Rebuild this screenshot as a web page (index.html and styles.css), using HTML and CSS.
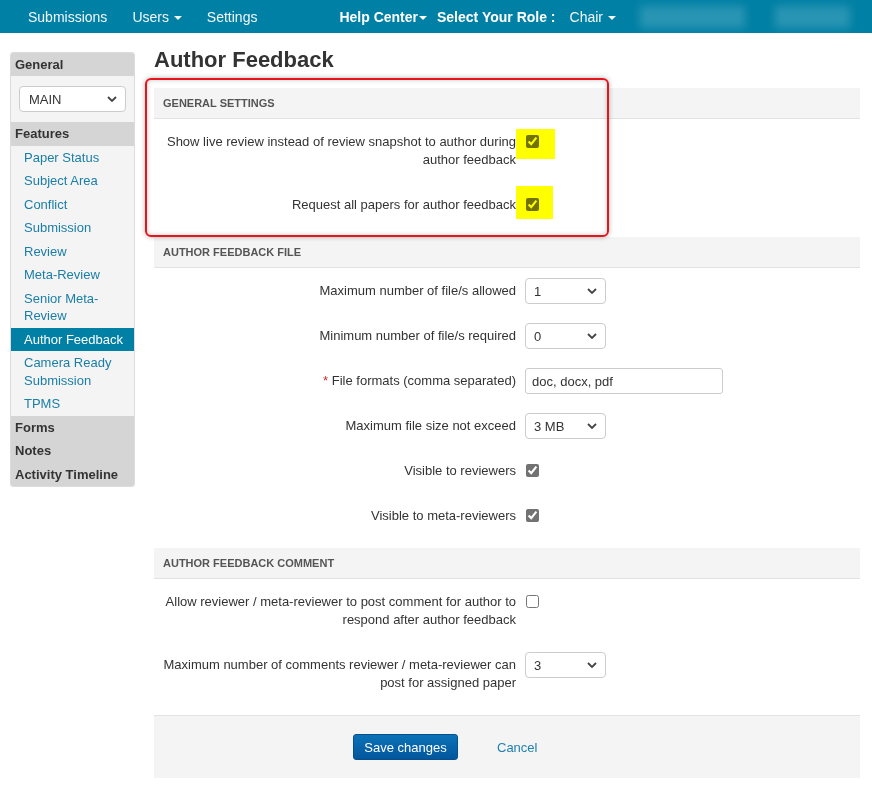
FILE: index.html
```html
<!DOCTYPE html>
<html lang="en">
<head>
    <meta charset="UTF-8">
    <title>Author Feedback</title>
    <link rel="stylesheet" href="styles.css">
</head>
<body>

<nav class="topbar">
    <a href="#" class="nav-link nav-submissions">Submissions</a>
    <a href="#" class="nav-link nav-users">Users <span class="caret"></span></a>
    <a href="#" class="nav-link nav-settings">Settings</a>
    <a href="#" class="nav-link nav-bold nav-help">Help Center<span class="caret"></span></a>
    <span class="nav-bold nav-role">Select Your Role :</span>
    <a href="#" class="nav-link nav-chair">Chair <span class="caret"></span></a>
    <span class="nav-blur blur-name"></span>
    <span class="nav-blur blur-user"></span>
</nav>

<div class="layout">
    <aside class="sidebar">
        <div class="side-head">General</div>
        <div class="side-select-wrap">
            <select class="side-select">
                <option>MAIN</option>
            </select>
        </div>
        <div class="side-head">Features</div>
        <a href="#" class="side-link">Paper Status</a>
        <a href="#" class="side-link">Subject Area</a>
        <a href="#" class="side-link">Conflict</a>
        <a href="#" class="side-link">Submission</a>
        <a href="#" class="side-link">Review</a>
        <a href="#" class="side-link">Meta-Review</a>
        <a href="#" class="side-link">Senior Meta-Review</a>
        <a href="#" class="side-link active">Author Feedback</a>
        <a href="#" class="side-link">Camera Ready Submission</a>
        <a href="#" class="side-link">TPMS</a>
        <div class="side-head">Forms</div>
        <div class="side-head">Notes</div>
        <div class="side-head">Activity Timeline</div>
    </aside>

    <main class="main">
        <h1 class="page-title">Author Feedback</h1>

        <form>
            <section class="panel">
                <div class="panel-head">General Settings</div>
                <div class="panel-body">
                    <div class="form-row">
                        <label class="row-label" for="chk-live">Show live review instead of review snapshot to author during author feedback</label>
                        <div class="row-control"><input type="checkbox" id="chk-live" class="check" checked></div>
                    </div>
                    <div class="form-row">
                        <label class="row-label" for="chk-all">Request all papers for author feedback</label>
                        <div class="row-control"><input type="checkbox" id="chk-all" class="check" checked></div>
                    </div>
                </div>
            </section>

            <section class="panel">
                <div class="panel-head">Author Feedback File</div>
                <div class="panel-body">
                    <div class="form-row">
                        <label class="row-label" for="sel-max">Maximum number of file/s allowed</label>
                        <div class="row-control">
                            <select id="sel-max" class="select"><option>1</option></select>
                        </div>
                    </div>
                    <div class="form-row">
                        <label class="row-label" for="sel-min">Minimum number of file/s required</label>
                        <div class="row-control">
                            <select id="sel-min" class="select"><option>0</option></select>
                        </div>
                    </div>
                    <div class="form-row">
                        <label class="row-label" for="txt-formats"><span class="required">*</span> File formats (comma separated)</label>
                        <div class="row-control">
                            <input type="text" id="txt-formats" class="text-input" value="doc, docx, pdf">
                        </div>
                    </div>
                    <div class="form-row">
                        <label class="row-label" for="sel-size">Maximum file size not exceed</label>
                        <div class="row-control">
                            <select id="sel-size" class="select"><option>3 MB</option></select>
                        </div>
                    </div>
                    <div class="form-row">
                        <label class="row-label" for="chk-rev">Visible to reviewers</label>
                        <div class="row-control"><input type="checkbox" id="chk-rev" class="check" checked></div>
                    </div>
                    <div class="form-row">
                        <label class="row-label" for="chk-meta">Visible to meta-reviewers</label>
                        <div class="row-control"><input type="checkbox" id="chk-meta" class="check" checked></div>
                    </div>
                </div>
            </section>

            <section class="panel">
                <div class="panel-head">Author Feedback Comment</div>
                <div class="panel-body">
                    <div class="form-row">
                        <label class="row-label" for="chk-comment">Allow reviewer / meta-reviewer to post comment for author to respond after author feedback</label>
                        <div class="row-control"><input type="checkbox" id="chk-comment" class="check"></div>
                    </div>
                    <div class="form-row">
                        <label class="row-label" for="sel-comments">Maximum number of comments reviewer / meta-reviewer can post for assigned paper</label>
                        <div class="row-control">
                            <select id="sel-comments" class="select"><option>3</option></select>
                        </div>
                    </div>
                </div>
            </section>

            <div class="form-actions">
                <button type="button" class="btn-save">Save changes</button>
                <a href="#" class="cancel-link">Cancel</a>
            </div>
        </form>

        <!-- annotation marks over the screenshot -->
        <div class="annot-box"></div>
        <div class="marker marker-1"></div>
        <div class="marker marker-2"></div>
    </main>
</div>

</body>
</html>
```

FILE: styles.css
```css
body {
    margin: 0;
    font-family: "Liberation Sans", Arial, Helvetica, sans-serif;
    font-size: 13px;
    color: #333;
    background: #fff;
}

a {
    text-decoration: none;
}

/* top navigation */
.topbar {
    display: flex;
    align-items: center;
    height: 33px;
    padding-left: 28px;
    font-size: 14px;
    background-color: #0180a5;
    color: #fff;
}

.nav-link {
    color: #f2f7fa;
}

.nav-bold {
    font-weight: bold;
    color: #fff;
}

.nav-users {
    margin-left: 25px;
}

.nav-settings {
    margin-left: 25px;
}

.nav-help {
    margin-left: 82px;
}

.nav-role {
    margin-left: 10px;
}

.nav-chair {
    margin-left: 14px;
}

.caret {
    display: inline-block;
    width: 0;
    height: 0;
    margin-left: 1px;
    vertical-align: middle;
    border-top: 4px solid;
    border-left: 4px solid transparent;
    border-right: 4px solid transparent;
}

.nav-blur {
    height: 22px;
    background: rgba(255, 255, 255, 0.16);
    filter: blur(4px);
}

.blur-name {
    width: 105px;
    margin-left: 24px;
}

.blur-user {
    width: 75px;
    margin-left: 30px;
}

/* page layout */
.layout {
    display: flex;
    align-items: flex-start;
    padding: 14px 12px 0 10px;
}

.sidebar {
    width: 125px;
    margin-top: 5px;
    box-sizing: border-box;
    background: #f4f4f4;
    border: 1px solid #dcdcdc;
    border-radius: 3px;
    overflow: hidden;
}

.side-head {
    padding: 0 4px;
    line-height: 23.4px;
    font-weight: bold;
    background: #d5d5d5;
    color: #333;
}

.side-select-wrap {
    padding: 10px 8px 10px 8px;
}

.side-select {
    width: 100%;
    height: 26px;
}

.side-link {
    display: block;
    padding: 3px 6px 3px 13px;
    line-height: 17.5px;
    color: #1a7ea6;
}

.side-link.active {
    background: #0180a5;
    color: #fff;
}

.main {
    position: relative;
    width: 706px;
    margin-left: 19px;
}

.page-title {
    margin: 0 0 15px 0;
    font-size: 22px;
    line-height: 26px;
    color: #333;
}

/* panels */
.panel-head {
    height: 30px;
    padding-left: 9px;
    line-height: 30px;
    font-size: 11px;
    font-weight: bold;
    text-transform: uppercase;
    color: #555;
    background: #f4f4f4;
    border-bottom: 1px solid #e2e2e2;
}

.panel-body {
    padding-top: 10px;
}

.form-row {
    display: grid;
    grid-template-columns: 362px auto;
    column-gap: 9px;
    margin-bottom: 19px;
}

.row-label {
    padding: 4px 0;
    line-height: 18px;
    text-align: right;
}

.required {
    color: #c9302c;
}

.row-control {
    display: flex;
    align-items: flex-start;
}

.check {
    width: 13px;
    height: 13px;
    margin: 6px 0 0 1px;
    accent-color: #727272;
}

.select, .side-select {
    box-sizing: border-box;
    height: 26px;
    padding: 0 20px 0 8px;
    font-family: inherit;
    font-size: 13px;
    color: #333;
    background: #fff url("data:image/svg+xml;utf8,<svg xmlns='http://www.w3.org/2000/svg' width='10' height='6'><path d='M1 1l4 4 4-4' fill='none' stroke='%23444' stroke-width='1.8'/></svg>") no-repeat right 8px center;
    border: 1px solid #ccc;
    border-radius: 4px;
    appearance: none;
    -webkit-appearance: none;
}

.select {
    width: 81px;
}

.side-select {
    padding-left: 9px;
}

.text-input {
    box-sizing: border-box;
    width: 198px;
    height: 26px;
    padding: 0 6px;
    font-family: inherit;
    font-size: 13px;
    color: #333;
    border: 1px solid #ccc;
    border-radius: 3px;
}

/* footer buttons */
.form-actions {
    display: flex;
    align-items: center;
    height: 62px;
    padding-left: 199px;
    background: #f4f4f4;
    border-top: 1px solid #e2e2e2;
}

.btn-save {
    width: 105px;
    height: 26px;
    padding: 0;
    font-family: inherit;
    font-size: 13px;
    color: #fff;
    background: linear-gradient(#0b72b7, #03569c);
    border: 1px solid #064f8c;
    border-radius: 3px;
    cursor: pointer;
}

.cancel-link {
    margin-left: 39px;
    color: #1f80b0;
}

/* red box and highlighter marks */
.annot-box {
    position: absolute;
    left: -9px;
    top: 31px;
    width: 464px;
    height: 159px;
    box-sizing: border-box;
    border: 2px solid #e8141b;
    border-radius: 6px;
    box-shadow: 0 0 5px rgba(0, 0, 0, 0.3), inset 0 0 5px rgba(0, 0, 0, 0.2);
}

.marker {
    position: absolute;
    left: 362px;
    background: #ffff00;
    mix-blend-mode: multiply;
}

.marker-1 {
    top: 82px;
    width: 39px;
    height: 30px;
}

.marker-2 {
    top: 139px;
    width: 37px;
    height: 33px;
}
```
